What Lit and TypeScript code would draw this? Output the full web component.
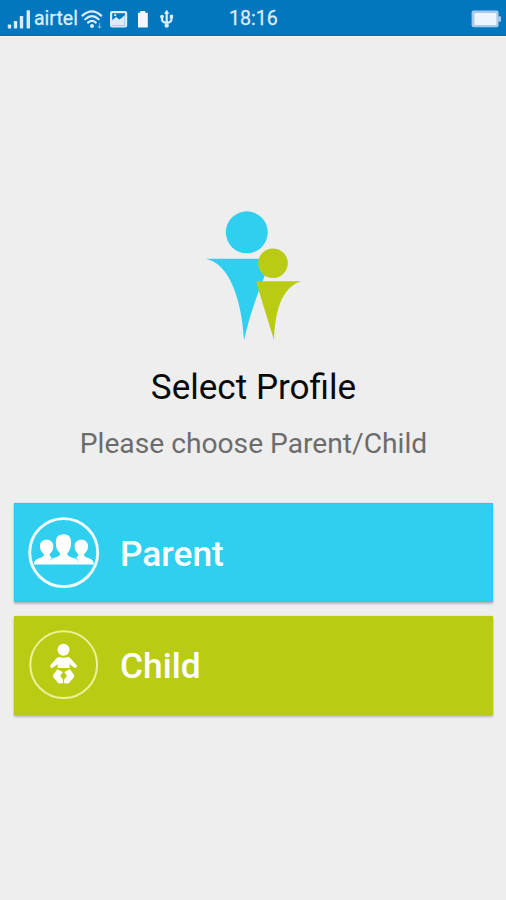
import { LitElement, html, css, svg } from "lit";
import { customElement, property } from "lit/decorators.js";

@customElement("status-bar")
class StatusBar extends LitElement {
  static styles = css`
    :host {
      display: grid;
      grid-template-columns: 229px 1fr auto;
      align-items: center;
      height: 35px;
      background: #0277bd;
      border-bottom: 1px solid #0a68a8;
      box-shadow: 0 1px 0 #fbfaf6;
      color: #dcebfa;
      font: 400 20px/35px Roboto, sans-serif;
      -webkit-text-stroke: 0.3px #dcebfa;
      padding-right: 5px;
    }
    .left {
      display: flex;
      align-items: center;
      padding-left: 7px;
    }
    .carrier {
      width: 47px;
      padding: 1px 0 0 2px;
      box-sizing: border-box;
      font-size: 19.5px;
    }
    .time {
      padding-top: 1px;
      font-size: 19.6px;
    }
    svg {
      display: block;
      flex: none;
    }
  `;

  render() {
    return html`
      <div class="left">
        <svg width="25" height="35" viewBox="7 0 25 35" fill="#dcebfa">
          <rect x="7.8" y="23.6" width="3.4" height="3.8" rx="0.6" />
          <rect x="13.8" y="20" width="3.4" height="7.4" rx="0.6" />
          <rect x="19.8" y="15" width="3.4" height="12.4" rx="0.6" />
          <rect x="26.6" y="9.2" width="3.4" height="18.2" rx="0.6" />
        </svg>
        <span class="carrier">airtel</span>
        <svg width="100" height="35" viewBox="79 0 100 35" fill="none" stroke="#dcebfa">
          <g stroke-width="2.2" stroke-linecap="round">
            <path d="M82.4 14.6Q92 6.2 101.2 14.6" />
            <path d="M85.2 18.2Q92 12.2 98.6 18.2" />
            <path d="M88 21.6Q92 18.2 95.8 21.6" />
          </g>
          <circle cx="92" cy="25" r="2" fill="#dcebfa" stroke="none" />
          <path d="M99.6 22v5M98 25.3l1.6 1.9 1.6-1.9" stroke-width="0.9" opacity="0.7" />
          <rect x="111.1" y="11.1" width="15" height="14.4" rx="1" stroke-width="2.2" />
          <path d="M112 24.5v-5.3l4.2-3.2 3 2.6 2.2-1.4 3.4-3.2V24.5z" fill="#dcebfa" stroke="none" />
          <circle cx="115.2" cy="14.2" r="1.1" fill="#dcebfa" stroke="none" />
          <path d="M138 11.8h2.2V10h5v1.8h2.6v14.6H138z" fill="#f2f8ff" stroke="none" />
          <g stroke-width="2.2">
            <path d="M166.7 12v12M162 16v2.4q0 2.8 4.7 3.4q4.7-.6 4.7-3.4V16" />
          </g>
          <g fill="#dcebfa" stroke="none">
            <path d="M166.7 8.8l2.7 4H164z" />
            <circle cx="162" cy="15.6" r="1.9" />
            <rect x="169.8" y="13.8" width="3.3" height="3.6" />
            <circle cx="166.7" cy="24.6" r="2.2" />
          </g>
        </svg>
      </div>
      <span class="time">18:16</span>
      <svg width="30" height="35" viewBox="471 0 30 35">
        <rect x="471.6" y="9.6" width="27" height="16.6" rx="2" fill="#a9c9ea" />
        <rect x="498" y="15.2" width="3" height="5.6" rx="1" fill="#a9c9ea" />
        <rect x="474.4" y="12" width="22" height="12" rx="1" fill="#ecf5fd" />
      </svg>
    `;
  }
}

const parentIcon = svg`
  <circle cx="35.7" cy="35.6" r="34" fill="none" stroke="#f2fdff" stroke-width="2.9" />
  <g fill="#fff">
    <path d="M6 47.4C6.1 43.6 8 42.4 11 41.3C14.5 40.1 15.9 39.5 16 37.2C13.4 35 12 32.4 12 29.2C12 25.3 14.6 22.8 18.6 22.8S25.4 25.3 25.4 29.2C25.4 32.4 24 35 21.6 37.2C21.7 39 22.3 39.8 24 40.5C22.5 42 21.3 43.6 20.6 47.4Z" />
    <path d="M65.8 47.4C65.4 43.6 64 42.4 61 41.3C57.5 40.1 56.1 39.5 56 37.2C58.6 35 60 32.4 60 29.2C60 25.3 57.4 22.8 53.4 22.8S46.6 25.3 46.6 29.2C46.6 32.4 48 35 50.4 37.2C50.3 39 49.7 39.8 48 40.5C49.5 42 50.7 43.6 51.3 47.4Z" />
    <path d="M20.2 47.4C20.9 43.4 22.9 41.9 26.4 40.8C30.2 39.6 32 39 32.1 36.2C29.4 33.6 28.3 31.4 28 28C27.3 20.9 29.5 17.2 35.5 17.2S43.7 20.9 43 28C42.7 31.4 41.7 33.6 39.3 36.2C39.4 39 41.2 39.6 45 40.8C48.7 41.9 50.9 43.4 51.4 47.4Z" />
  </g>
`;

const childIcon = svg`
  <circle cx="35.7" cy="35.7" r="33.4" fill="none" stroke="#edf19c" stroke-width="2" />
  <g fill="#fff">
    <circle cx="35.5" cy="20.8" r="6" />
    <path d="M30.7 27.9Q35.5 29.4 40.3 27.9Q42.2 28.6 43.6 30.5L48.7 36.2Q49.6 37.7 48.3 38.6Q47 39.3 45.7 38.3L41.6 35.2V38.9H29.6V35.2L25.4 38.3Q24.1 39.3 22.8 38.6Q21.5 37.7 22.4 36.2L27.4 30.5Q28.8 28.6 30.7 27.9Z" />
    <path d="M29.4 40.2L34.8 43L32.2 47L35.1 50.4V54.2L32 54.6Q30.7 54.7 29.7 53.4L25.4 48.2Q24.6 47 25.2 45.8Z" />
    <path d="M41.8 40.2L36.4 43L39 47L36.1 50.4V54.2L39.2 54.6Q40.5 54.7 41.5 53.4L45.8 48.2Q46.6 47 46 45.8Z" />
  </g>
`;

@customElement("profile-button")
class ProfileButton extends LitElement {
  @property() kind = "parent";
  @property() label = "";

  static styles = css`
    :host {
      display: block;
    }
    .button {
      display: flex;
      align-items: center;
      gap: 20px;
      width: 100%;
      height: 99px;
      padding: 0 0 0 14px;
      border: 0;
      box-sizing: border-box;
      color: #fff;
      font: 500 35.3px/40px Roboto, sans-serif;
      text-align: left;
      box-shadow: 0 2px 2px rgba(0, 0, 0, 0.22), 0 0 2px rgba(0, 0, 0, 0.1);
    }
    .parent {
      background: #30cff0;
      box-shadow: inset 0 0 0 1px #23cbf1, 0 2px 2px rgba(0, 0, 0, 0.22), 0 0 2px rgba(0, 0, 0, 0.1);
    }
    .child {
      background: #bacb14;
    }
    .label {
      padding-top: 2px;
    }
    svg {
      display: block;
      flex: none;
    }
  `;

  render() {
    return html`
      <button class="button ${this.kind}">
        <svg width="72" height="72" viewBox="0 0 72 72">
          ${this.kind === "parent" ? parentIcon : childIcon}
        </svg>
        <span class="label">${this.label}</span>
      </button>
    `;
  }
}

@customElement("app-root")
class AppRoot extends LitElement {
  static styles = css`
    :host {
      display: flex;
      flex-direction: column;
      height: 900px;
      background: #eeeeee;
      font-family: Roboto, sans-serif;
    }
    .main {
      display: flex;
      flex-direction: column;
      align-items: center;
      padding: 174px 13px 0 14px;
    }
    .logo {
      display: block;
    }
    .title {
      margin: 23px 0 0;
      font-size: 35.1px;
      line-height: 44px;
      font-weight: 400;
      color: #0a0a0a;
    }
    .subtitle {
      margin: 17px 0 0;
      font-size: 28.2px;
      line-height: 36px;
      color: #6c6c6c;
    }
    .choices {
      display: grid;
      gap: 13.5px;
      width: 100%;
      margin-top: 41px;
    }
  `;

  render() {
    return html`
      <status-bar></status-bar>
      <div class="main">
        <svg class="logo" width="98" height="132" viewBox="205 210 98 132">
          <circle cx="246.8" cy="232.3" r="21" fill="#30cff0" />
          <path d="M205.5 258.8H262L265 275Q250 312 244 340.5C242 302 230 263 205.5 258.8Z" fill="#30cff0" />
          <circle cx="273" cy="263.3" r="14.8" fill="#bacb14" />
          <path d="M256 281.3H301.5C281 287 275 313 274 340Q264 308 256 281.3Z" fill="#bacb14" />
        </svg>
        <h1 class="title">Select Profile</h1>
        <p class="subtitle">Please choose Parent/Child</p>
        <div class="choices">
          <profile-button kind="parent" label="Parent"></profile-button>
          <profile-button kind="child" label="Child"></profile-button>
        </div>
      </div>
    `;
  }
}
